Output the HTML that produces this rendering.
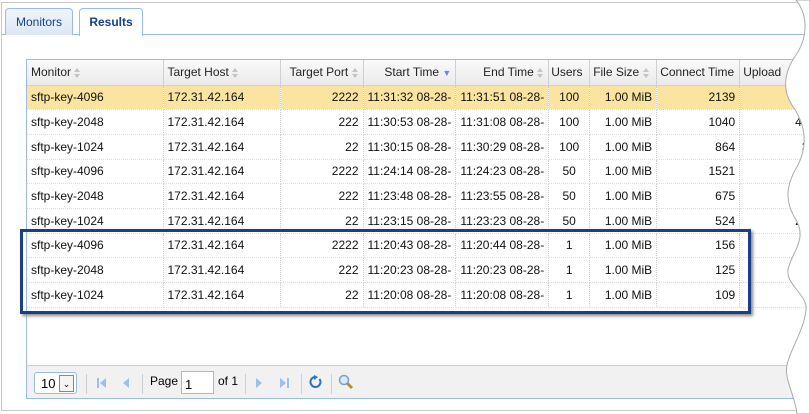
<!DOCTYPE html>
<html><head><style>
*{margin:0;padding:0;box-sizing:border-box}
body{width:810px;height:414px;background:#fff;font-family:"Liberation Sans",Arial,sans-serif;font-size:12px;color:#000;position:relative;overflow:hidden}
.panel{position:absolute;left:1px;top:2px;width:820px;height:409px;border:1px solid #c8c8c8;background:#fff}
.strip{position:absolute;left:2px;top:34px;width:820px;height:1px;background:#99bbe8}
.tab{position:absolute;top:8px;height:27px;border:1px solid #99bbe8;border-bottom:none;border-radius:4px 4px 0 0;background:linear-gradient(#f1f5fb,#dce7f6);color:#15428b;font-size:12px;line-height:26px;text-align:center}
.grid{position:absolute;left:26px;top:59px;width:800px;height:340px;border:1px solid #99bbe8;background:#fff}
table{border-collapse:collapse;table-layout:fixed;position:absolute;left:0;top:0}
th{height:25px;background:linear-gradient(#fafafa,#eaeaea);font-weight:normal;color:#222;border-right:1px solid #d0d0d0;border-bottom:1px solid #d0d0d0;padding:0 4px;white-space:nowrap;overflow:hidden;text-align:left}
td{height:24.7px;border-right:1px dotted #ccc;border-bottom:1px dotted #ddd;padding:0 4px;white-space:nowrap;overflow:hidden;color:#111}
.r{text-align:right}.c{text-align:center}
tr.sel td{background:#fbe3a0}
.s{display:inline-block;width:7px;height:10px;vertical-align:middle;position:relative}
.s:before{content:"";position:absolute;left:0;top:0;border:3.5px solid transparent;border-bottom:4px solid #c4c4c4;border-top:none}
.s:after{content:"";position:absolute;left:0;top:6px;border:3.5px solid transparent;border-top:4px solid #c4c4c4;border-bottom:none}
.tb{position:absolute;left:0;bottom:0;width:100%;height:33px;border-top:1px solid #d0d0d0;background:#f1f1f1}
.hl{position:absolute;left:20px;top:229px;width:731px;height:85px;border:3px solid #1a3e87;box-shadow:2px 2px 3px #888}
.sep{position:absolute;top:8px;width:1px;height:20px;background:#d0d0d0}
</style></head><body>
<div class="panel"></div>
<div class="strip"></div>
<div class="tab" style="left:5px;width:68px;color:#15428b">Monitors</div>
<div class="tab" style="left:79px;width:64px;height:28px;background:#fff;font-weight:bold;color:#15428b">Results</div>
<div class="grid">
<table>
<colgroup><col style="width:136px"><col style="width:117px"><col style="width:83px"><col style="width:92px"><col style="width:91px"><col style="width:41px"><col style="width:67px"><col style="width:83px"><col style="width:80px"></colgroup>
<tr><th>Monitor <span class="s"></span></th><th>Target Host <span class="s"></span></th><th class="r">Target Port <span class="s"></span></th><th class="r">Start Time <span style="color:#6a8fd0;font-size:9px">&#9660;</span></th><th class="r">End Time <span class="s"></span></th><th style="padding:0 2px">Users</th><th style="padding:0 3px">File Size <span class="s"></span></th><th style="padding:0 3px">Connect Time</th><th style="padding:0 3px">Upload</th></tr>
<tr class="sel"><td>sftp-key-4096</td><td>172.31.42.164</td><td class="r">2222</td><td>11:31:32 08-28-</td><td>11:31:51 08-28-</td><td class="c">100</td><td class="r">1.00 MiB</td><td class="r">2139</td><td class="r">8</td></tr>
<tr><td>sftp-key-2048</td><td>172.31.42.164</td><td class="r">222</td><td>11:30:53 08-28-</td><td>11:31:08 08-28-</td><td class="c">100</td><td class="r">1.00 MiB</td><td class="r">1040</td><td class="r">450</td></tr>
<tr><td>sftp-key-1024</td><td>172.31.42.164</td><td class="r">22</td><td>11:30:15 08-28-</td><td>11:30:29 08-28-</td><td class="c">100</td><td class="r">1.00 MiB</td><td class="r">864</td><td class="r">35</td></tr>
<tr><td>sftp-key-4096</td><td>172.31.42.164</td><td class="r">2222</td><td>11:24:14 08-28-</td><td>11:24:23 08-28-</td><td class="c">50</td><td class="r">1.00 MiB</td><td class="r">1521</td><td class="r">2</td></tr>
<tr><td>sftp-key-2048</td><td>172.31.42.164</td><td class="r">222</td><td>11:23:48 08-28-</td><td>11:23:55 08-28-</td><td class="c">50</td><td class="r">1.00 MiB</td><td class="r">675</td><td class="r">2</td></tr>
<tr><td>sftp-key-1024</td><td>172.31.42.164</td><td class="r">22</td><td>11:23:15 08-28-</td><td>11:23:23 08-28-</td><td class="c">50</td><td class="r">1.00 MiB</td><td class="r">524</td><td class="r">247</td></tr>
<tr><td>sftp-key-4096</td><td>172.31.42.164</td><td class="r">2222</td><td>11:20:43 08-28-</td><td>11:20:44 08-28-</td><td class="c">1</td><td class="r">1.00 MiB</td><td class="r">156</td><td class="r">7</td></tr>
<tr><td>sftp-key-2048</td><td>172.31.42.164</td><td class="r">222</td><td>11:20:23 08-28-</td><td>11:20:23 08-28-</td><td class="c">1</td><td class="r">1.00 MiB</td><td class="r">125</td><td class="r"></td></tr>
<tr><td>sftp-key-1024</td><td>172.31.42.164</td><td class="r">22</td><td>11:20:08 08-28-</td><td>11:20:08 08-28-</td><td class="c">1</td><td class="r">1.00 MiB</td><td class="r">109</td><td class="r"></td></tr>
</table>
<div class="tb">
 <div style="position:absolute;left:7px;top:6px;width:43px;height:22px;border:1px solid #99bbe8;border-radius:3px;background:#fff;font-size:13px;line-height:22px;padding-left:6px">10<span style="position:absolute;right:2px;top:2px;width:15px;height:17px;border:1px solid #888;background:#f4f4f4;font-size:9px;line-height:16px;text-align:center">&#8964;</span></div>
 <div class="sep" style="left:59px"></div>
 <svg style="position:absolute;left:70px;top:11px" width="40" height="12"><rect x="0" y="1" width="2" height="10" fill="#9cc0ea"/><path d="M9 1 L3 6 L9 11Z" fill="#9cc0ea"/><path d="M32 1 L26 6 L32 11Z" fill="#9cc0ea"/></svg>
 <div class="sep" style="left:115px"></div>
 <div style="position:absolute;left:123px;top:8px;font-size:12px">Page</div>
 <div style="position:absolute;left:154px;top:5px;width:33px;height:23px;border:1px solid #99bbe8;background:#fff;padding:5px 0 0 3px;font-size:13px">1</div>
 <div style="position:absolute;left:191px;top:8px">of 1</div>
 <div class="sep" style="left:218px"></div>
 <svg style="position:absolute;left:229px;top:11px" width="40" height="12"><path d="M0 1 L6 6 L0 11Z" fill="#9cc0ea"/><path d="M24 1 L30 6 L24 11Z" fill="#9cc0ea"/><rect x="31" y="1" width="2" height="10" fill="#9cc0ea"/></svg>
 <div class="sep" style="left:274px"></div>
 <svg style="position:absolute;left:282px;top:9px" width="14" height="14"><path d="M10.5 4 A5 5 0 1 1 6 2" fill="none" stroke="#2a6fc9" stroke-width="2"/><path d="M5 0 L9 2 L5 5Z" fill="#2a6fc9"/></svg>
 <div class="sep" style="left:304px"></div>
 <svg style="position:absolute;left:311px;top:8px" width="16" height="16"><circle cx="6" cy="6" r="4.5" fill="#dbe9f8" stroke="#7aa0c8" stroke-width="1.5"/><path d="M9.5 9.5 L14 14" stroke="#c08a30" stroke-width="3"/></svg>
</div>
</div>
<div class="hl"></div>
<svg style="position:absolute;left:0;top:0" width="810" height="414">
<path d="M796 0 C810 18,806 40,796 55 C784 72,782 90,792 105 C806 125,808 145,798 165 C786 185,784 200,796 220 C808 240,790 255,788 270 C786 285,808 295,806 310 C804 330,790 350,787 365 C784 380,795 395,797 414 L810 414 L810 0Z" fill="#fff" stroke="#aaa" stroke-width="1"/>
</svg>
</body></html>
